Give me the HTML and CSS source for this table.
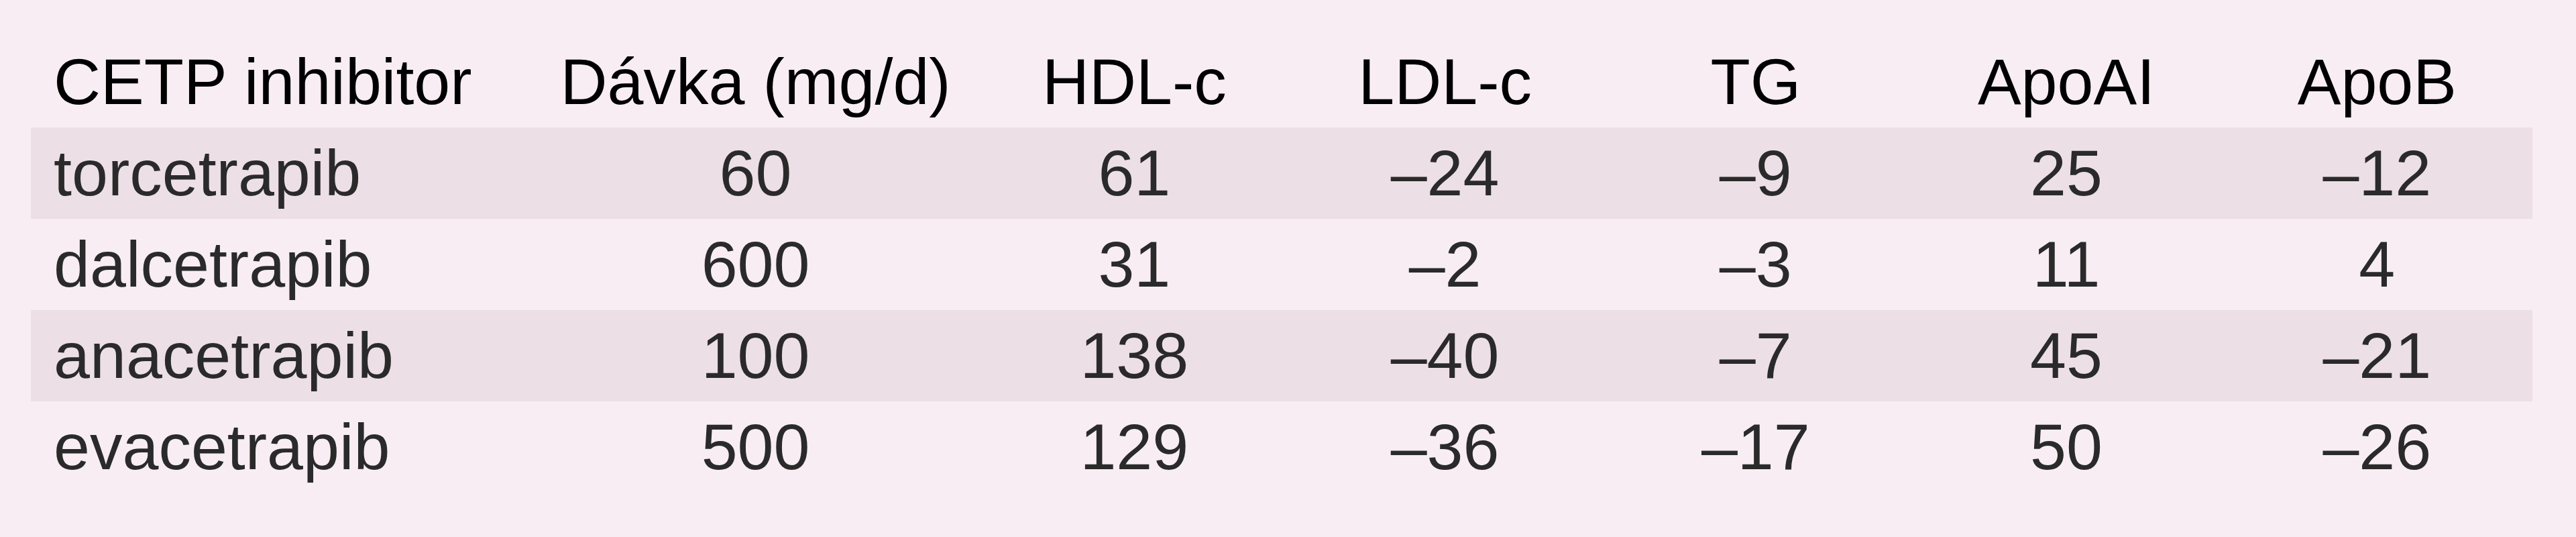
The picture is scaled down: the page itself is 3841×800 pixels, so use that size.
FILE: index.html
```html
<!DOCTYPE html>
<html lang="cs">
<head>
<meta charset="utf-8">
<title>CETP inhibitory</title>
<link rel="stylesheet" href="styles.css">
</head>
<body>
<table class="cetp">
  <colgroup>
    <col class="c-name">
    <col class="c-dose">
    <col class="c-val">
    <col class="c-val">
    <col class="c-val">
    <col class="c-val">
    <col class="c-val">
  </colgroup>
  <thead>
    <tr class="head">
      <th class="name">CETP inhibitor</th>
      <th>Dávka (mg/d)</th>
      <th>HDL-c</th>
      <th>LDL-c</th>
      <th>TG</th>
      <th>ApoAI</th>
      <th>ApoB</th>
    </tr>
  </thead>
  <tbody>
    <tr class="stripe">
      <td class="name">torcetrapib</td>
      <td>60</td><td>61</td><td>–24</td><td>–9</td><td>25</td><td>–12</td>
    </tr>
    <tr>
      <td class="name">dalcetrapib</td>
      <td>600</td><td>31</td><td>–2</td><td>–3</td><td>11</td><td>4</td>
    </tr>
    <tr class="stripe">
      <td class="name">anacetrapib</td>
      <td>100</td><td>138</td><td>–40</td><td>–7</td><td>45</td><td>–21</td>
    </tr>
    <tr>
      <td class="name">evacetrapib</td>
      <td>500</td><td>129</td><td>–36</td><td>–17</td><td>50</td><td>–26</td>
    </tr>
  </tbody>
</table>
</body>
</html>
```

FILE: styles.css
```css
html, body {
  margin: 0;
  padding: 0;
  background: #f7edf2;
}
body {
  width: 3841px;
  height: 800px;
  overflow: hidden;
  padding-top: 54px;
  box-sizing: border-box;
  font-family: "Liberation Sans", Arial, sans-serif;
}
.cetp {
  margin-left: 46px;
  border-collapse: collapse;
  table-layout: fixed;
  width: 3730px;
  font-size: 97px;
  color: #111;
}
.c-name { width: 747px; }
.c-dose { width: 666px; }
.c-val { width: 463px; }
.cetp th,
.cetp td {
  height: 136px;
  padding: 0;
  line-height: 136px;
  text-align: center;
  white-space: nowrap;
  vertical-align: middle;
}
.cetp th {
  font-weight: normal;
  color: #000;
}
.cetp td {
  color: #2a2a2a;
}
.cetp .name {
  text-align: left;
  padding-left: 34px;
}
.stripe {
  background: #ecdfe5;
}
```
